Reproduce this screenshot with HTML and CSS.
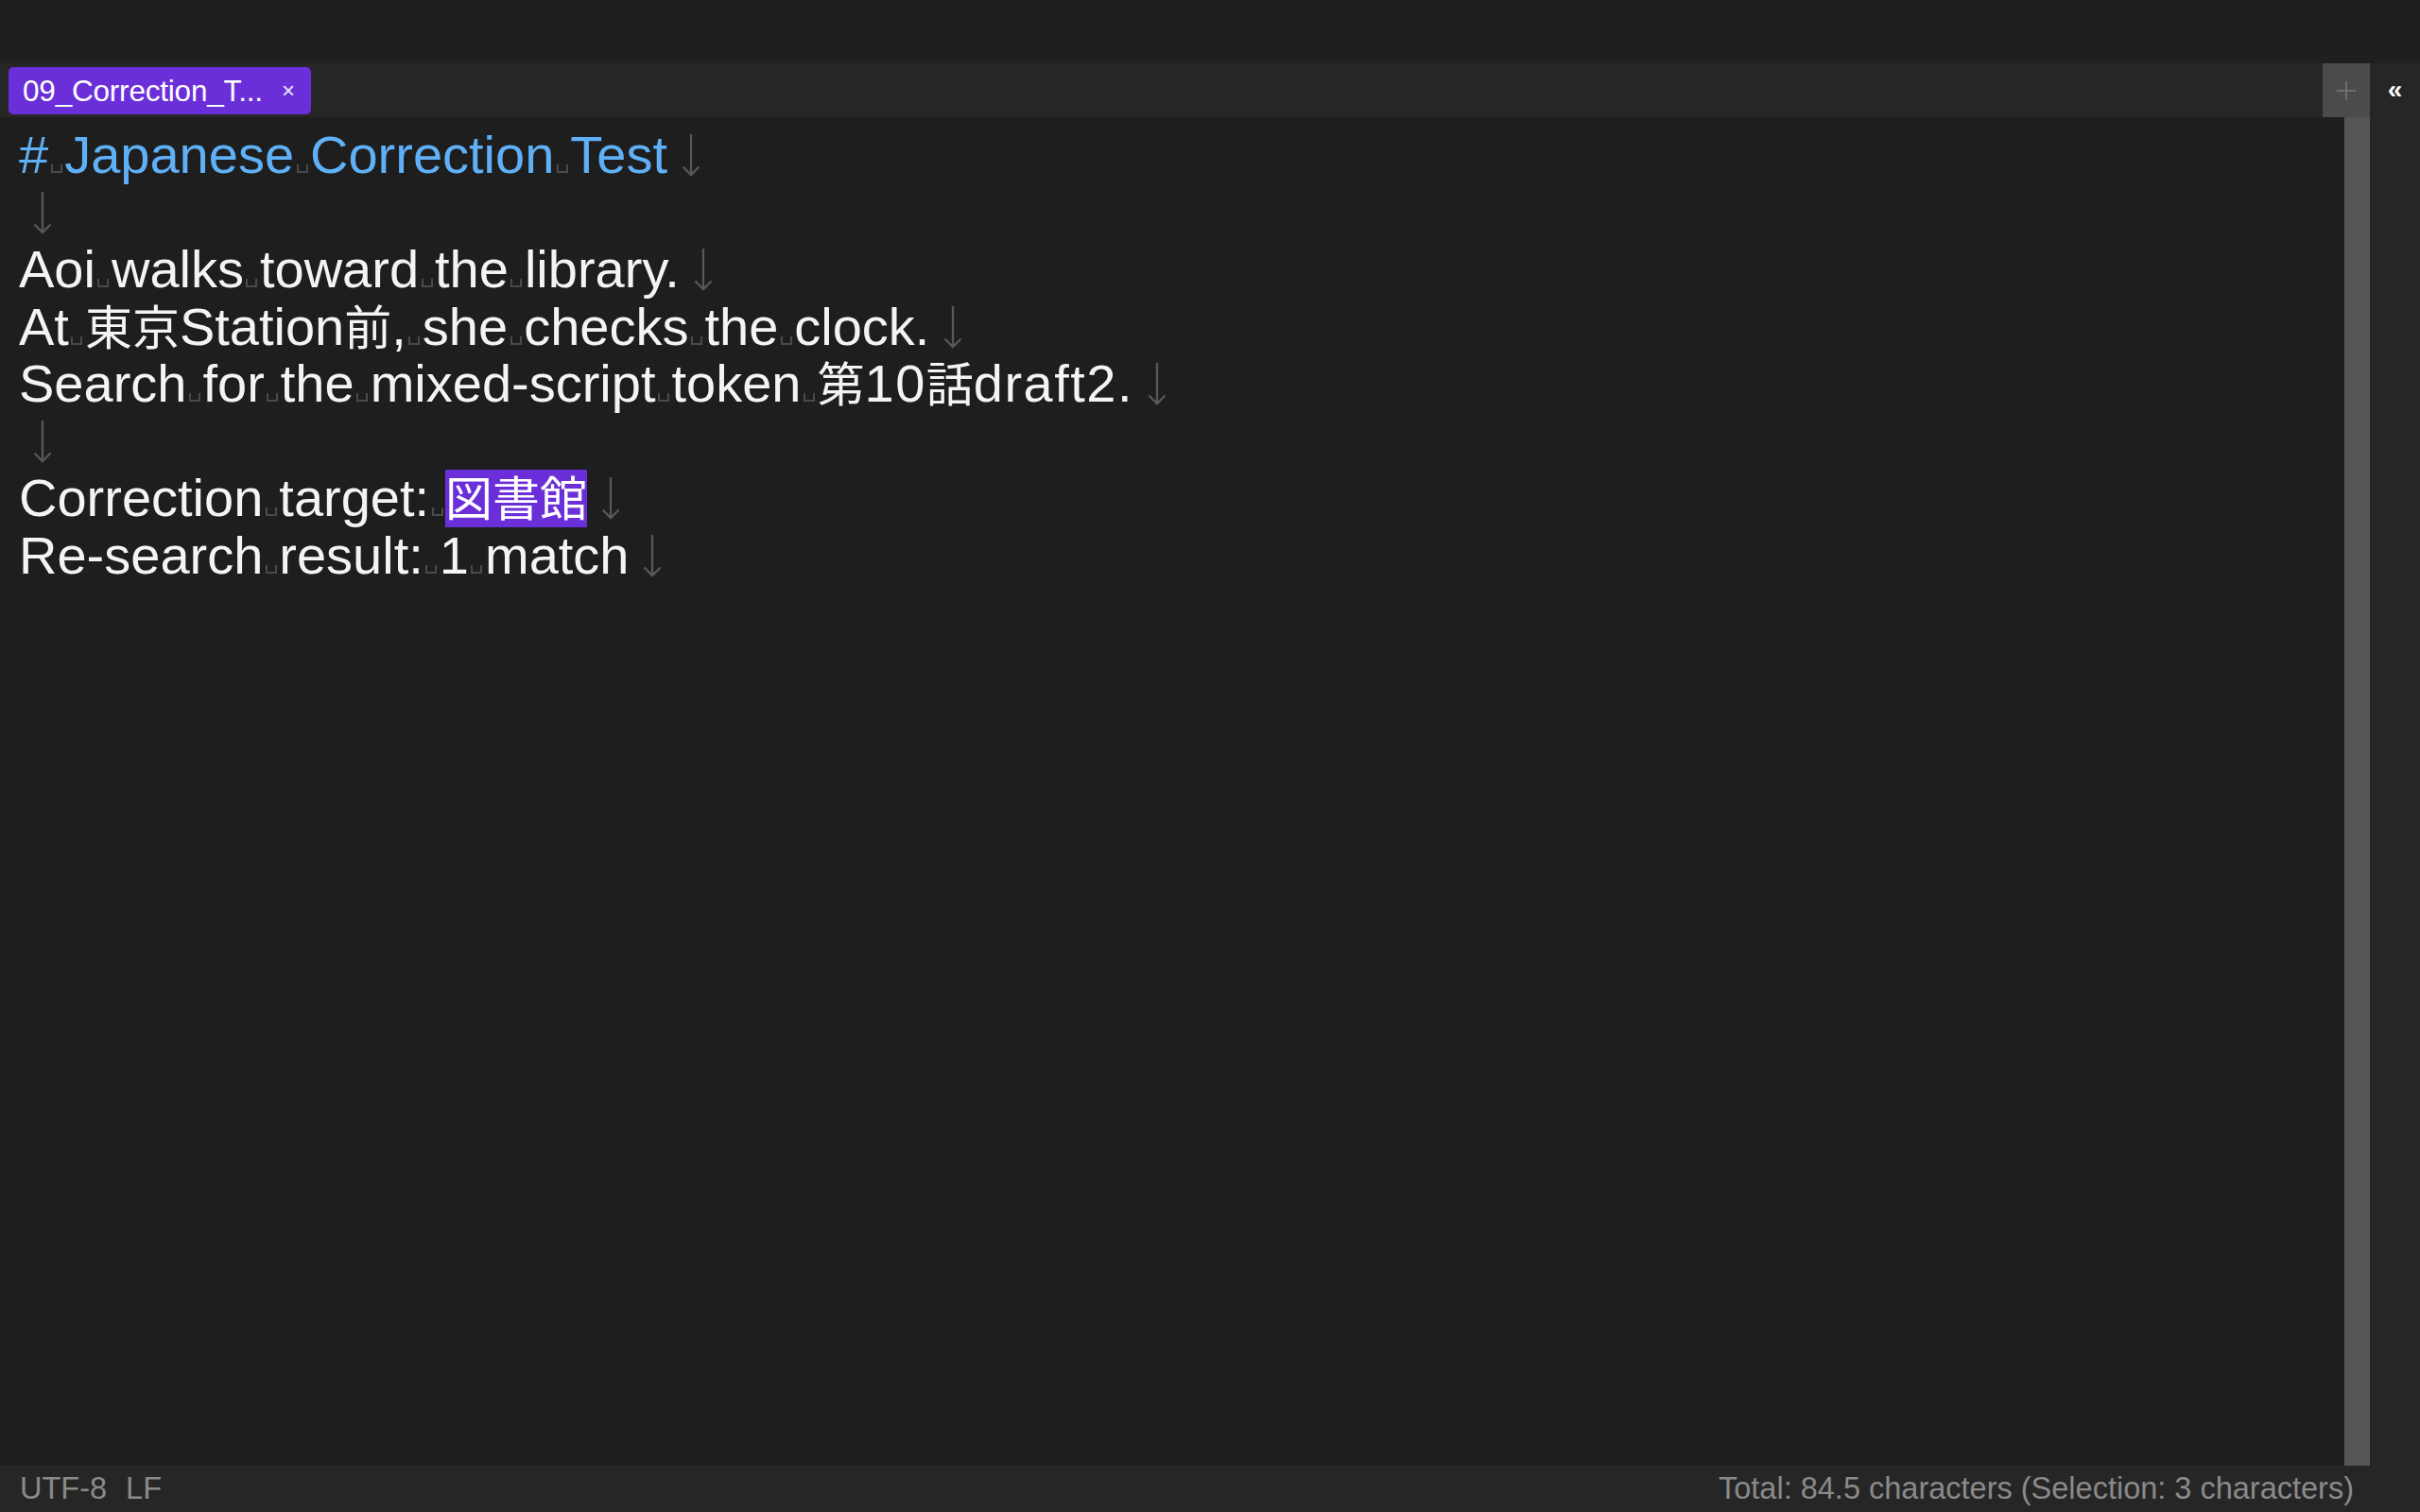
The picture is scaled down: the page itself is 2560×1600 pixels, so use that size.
FILE: index.html
```html
<!DOCTYPE html>
<html lang="ja">
<head>
<meta charset="utf-8">
<title>09_Correction_Test</title>
<link rel="stylesheet" href="styles.css">
</head>
<body>
<div class="app">
  <div class="topbar"></div>
  <div class="main">
    <div class="left">
      <div class="tabbar">
        <div class="tab"><span class="tab-title">09_Correction_T...</span><span class="tab-close">×</span></div>
        <div class="tab-spacer"></div>
        <div class="addbtn"><svg width="22" height="22" viewBox="0 0 22 22"><path d="M11 1V21M1 11H21" stroke="#6e6e6e" stroke-width="2" fill="none"/></svg></div>
      </div>
      <div class="editor-row">
        <div class="editor">
          <div class="line heading">#<span class="sp"></span>Japanese<span class="sp"></span>Correction<span class="sp"></span>Test<svg class="nl" viewBox="0 0 22 46"><path d="M11 1V44M2.5 35.5L11 44L19.5 35.5" /></svg></div>
          <div class="line"><svg class="nl" viewBox="0 0 22 46"><path d="M11 1V44M2.5 35.5L11 44L19.5 35.5" /></svg></div>
          <div class="line">Aoi<span class="sp"></span>walks<span class="sp"></span>toward<span class="sp"></span>the<span class="sp"></span>library.<svg class="nl" viewBox="0 0 22 46"><path d="M11 1V44M2.5 35.5L11 44L19.5 35.5" /></svg></div>
          <div class="line">At<span class="sp"></span><span class="jp">東京</span>Station<span class="jp">前</span>,<span class="sp"></span>she<span class="sp"></span>checks<span class="sp"></span>the<span class="sp"></span>clock.<svg class="nl" viewBox="0 0 22 46"><path d="M11 1V44M2.5 35.5L11 44L19.5 35.5" /></svg></div>
          <div class="line">Search<span class="sp"></span>for<span class="sp"></span>the<span class="sp"></span>mixed-script<span class="sp"></span>token<span class="sp"></span><span class="jp">第</span><span class="wide">10</span><span class="jp">話</span><span class="wide">draft2.</span><svg class="nl" viewBox="0 0 22 46"><path d="M11 1V44M2.5 35.5L11 44L19.5 35.5" /></svg></div>
          <div class="line"><svg class="nl" viewBox="0 0 22 46"><path d="M11 1V44M2.5 35.5L11 44L19.5 35.5" /></svg></div>
          <div class="line">Correction<span class="sp"></span>target:<span class="sp"></span><span class="sel"><span class="jp">図書館</span></span><svg class="nl" viewBox="0 0 22 46"><path d="M11 1V44M2.5 35.5L11 44L19.5 35.5" /></svg></div>
          <div class="line">Re-search<span class="sp"></span>result:<span class="sp"></span>1<span class="sp"></span>match<svg class="nl" viewBox="0 0 22 46"><path d="M11 1V44M2.5 35.5L11 44L19.5 35.5" /></svg></div>
        </div>
        <div class="scrollbar"></div>
      </div>
      <div class="statusbar">
        <div class="status-left"><span>UTF-8</span><span>LF</span></div>
        <div class="status-right">Total: 84.5 characters (Selection: 3 characters)</div>
      </div>
    </div>
    <div class="sidepanel"><span class="collapse">«</span></div>
  </div>
</div>
</body>
</html>
```
FILE: styles.css
```css
* { box-sizing: border-box; }
html, body { margin: 0; padding: 0; }
body {
  width: 2560px;
  height: 1600px;
  overflow: hidden;
  background: #1f1f1f;
  font-family: "Liberation Sans", "Noto Sans CJK JP", sans-serif;
  color: #f2f2f2;
}
.app { display: flex; flex-direction: column; height: 1600px; }
.topbar { height: 67px; background: #1f1f1f; flex: none; }
.main { flex: 1; display: flex; min-height: 0; }
.left { flex: 1; display: flex; flex-direction: column; min-width: 0; }
.tabbar {
  height: 57px;
  flex: none;
  background: #262626;
  display: flex;
  align-items: stretch;
}
.tab {
  margin: 4px 0 3px 9px;
  width: 320px;
  background: #6b2fd9;
  border-radius: 5px;
  display: flex;
  align-items: center;
  padding: 0 17px 0 15px;
  color: #ffffff;
}
.tab-title { font-size: 31.5px; flex: 1; white-space: nowrap; letter-spacing: -0.2px; }
.tab-close { font-size: 24px; color: #ece6ff; }
.tab-spacer { flex: 1; }
.addbtn {
  width: 50px;
  background: #4b4b4b;
  display: flex;
  align-items: center;
  justify-content: center;
}
.editor-row { flex: 1; display: flex; min-height: 0; background: #1e1e1e; }
.editor {
  flex: 1;
  padding: 10px 0 0 20px;
  font-size: 56px;
  line-height: 60.5px;
  color: #f4f4f4;
}
.line { height: 60.5px; white-space: pre; }
.heading { color: #5fb0f6; }
.sp {
  display: inline-block;
  width: 12px;
  height: 9px;
  margin: 0 2.5px;
  border: 2px solid #4a4a4a;
  border-top: 0;
}
.wide { letter-spacing: 1.5px; }
.jp {
  font-family: "Noto Sans CJK JP", sans-serif;
  font-size: 50px;
  line-height: 1;
}
.sel {
  display: inline-block;
  background: #6a2fd8;
  color: #ffffff;
  line-height: 60.5px;
}
.nl {
  width: 22px;
  height: 46px;
  margin-left: 14px;
  vertical-align: -4px;
}
.nl path { stroke: #585858; stroke-width: 2.3; fill: none; }
.scrollbar { width: 27px; background: #555555; flex: none; }
.statusbar {
  height: 49px;
  flex: none;
  background: #262626;
  display: flex;
  align-items: center;
  justify-content: space-between;
  padding: 0 17px 0 21px;
  font-size: 32.5px;
  color: #8a8a8a;
}
.status-left { display: flex; gap: 20px; }
.sidepanel {
  width: 53px;
  flex: none;
  background: #262626;
  display: flex;
  justify-content: center;
  padding-top: 14px;
}
.collapse { font-size: 28px; font-weight: bold; color: #ffffff; line-height: 1; }
```
